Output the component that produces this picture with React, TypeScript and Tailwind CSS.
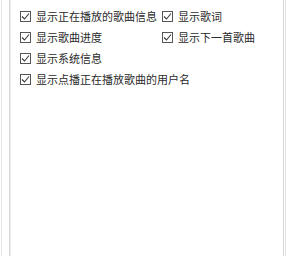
import React from "react";

function Check({ label }: { label: string }) {
  return (
    <div className="flex items-center h-[21px] whitespace-nowrap">
      <span className="w-[11px] h-[11px] border border-[#555555] bg-white flex items-center justify-center shrink-0">
        <svg width="9" height="9" viewBox="0 0 9 9">
          <path d="M1 4.5 L3.5 7 L8 1.5" fill="none" stroke="#3a3a3a" strokeWidth="1.1" />
        </svg>
      </span>
      <span className="ml-[5px] text-[11px] leading-none text-[#2a2a2a]">{label}</span>
    </div>
  );
}

export default function App() {
  return (
    <div
      className="w-[289px] h-[256px] bg-white flex"
      style={{ fontFamily: '"Noto Sans CJK SC", "Noto Sans", sans-serif' }}
    >
      <div className="ml-px h-full w-[285px] border-l border-r border-[#e4e4e4] pl-[7px] pr-px flex">
        <div className="h-full w-[275px] border-l border-r border-[#d6d6d6] shadow-[inset_1px_0_0_#eeeeee] pl-[10px] pt-[6px]">
          <div className="grid grid-cols-[142px_auto]">
            <Check label="显示正在播放的歌曲信息" />
            <Check label="显示歌词" />
            <Check label="显示歌曲进度" />
            <Check label="显示下一首歌曲" />
            <Check label="显示系统信息" />
            <div />
            <div className="col-span-2">
              <Check label="显示点播正在播放歌曲的用户名" />
            </div>
          </div>
        </div>
      </div>
    </div>
  );
}
